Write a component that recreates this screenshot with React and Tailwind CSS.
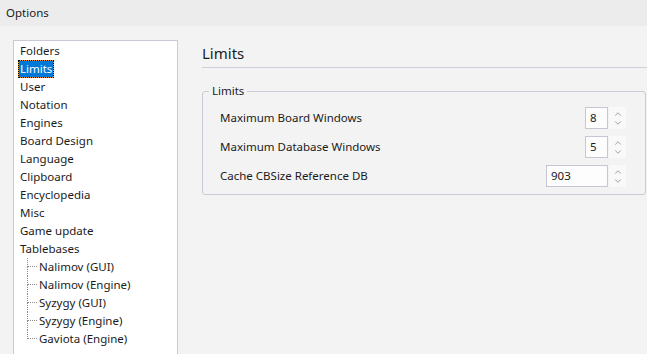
import { ChevronUp, ChevronDown } from 'lucide-react';

const items = [
    'Folders', 'Limits', 'User', 'Notation', 'Engines', 'Board Design', 'Language',
    'Clipboard', 'Encyclopedia', 'Misc', 'Game update', 'Tablebases',
];

const tablebases = [
    'Nalimov (GUI)', 'Nalimov (Engine)', 'Syzygy (GUI)', 'Syzygy (Engine)', 'Gaviota (Engine)',
];

const limits = [
    { label: 'Maximum Board Windows', value: '8', wide: false },
    { label: 'Maximum Database Windows', value: '5', wide: false },
    { label: 'Cache CBSize Reference DB', value: '903', wide: true },
];

function Spin({ value, wide }) {
    return (
        <div className="flex items-stretch gap-px h-[22px]">
            <div className={`${wide ? 'w-[62px]' : 'w-[23px]'} border border-[#c7c7d3] bg-[#fdfdfd] flex items-center pl-[4px]`}>
                {value}
            </div>
            <div className="w-[17px] bg-[#f9f9f9] flex flex-col items-center justify-center text-[#5f5f5f]">
                <ChevronUp size={10} strokeWidth={1.4} className="-mb-[1px]" />
                <ChevronDown size={10} strokeWidth={1.4} />
            </div>
        </div>
    );
}

function Child({ label, last }) {
    return (
        <div className="flex h-[18px] items-center">
            <div className="ml-[9px] w-[10px] h-[18px] flex flex-col">
                <div className="h-[9px] border-l border-b border-dotted border-[#8a8a8a]" />
                <div className={`h-[9px] ${last ? '' : 'border-l border-dotted border-[#8a8a8a]'}`} />
            </div>
            <span className="ml-[2px]">{label}</span>
        </div>
    );
}

export default function App() {
    return (
        <div className="w-[647px] h-[354px] overflow-hidden flex flex-col bg-[#f3f3f3] text-[#1b1b1b] text-[11.5px]"
            style={{ fontFamily: '"Noto Sans", "Open Sans", sans-serif' }}>
            <div className="h-[26px] shrink-0 bg-[#ececec] flex items-center pl-[6px]">Options</div>
            <div className="flex flex-1 pl-[13px] pt-[14px]">
                <div className="w-[165px] h-[340px] shrink-0 border border-[#c9c9d6] bg-white pt-px pl-[4px] leading-[18px]">
                    {items.map((it) => (
                        it === 'Limits' ? (
                            <div key={it} className="h-[18px] flex">
                                <span className="border border-dotted border-black bg-[#f7941d] flex">
                                    <span className="bg-[#0078d7] text-white px-px leading-[16px]">{it}</span>
                                </span>
                            </div>
                        ) : (
                            <div key={it} className="h-[18px] pl-[2px]">{it}</div>
                        )
                    ))}
                    {tablebases.map((t, i) => (
                        <Child key={t} label={t} last={i === tablebases.length - 1} />
                    ))}
                </div>
                <div className="flex-1 pl-[24px] flex flex-col">
                    <div className="h-[26px] flex items-center text-[15px] leading-none">Limits</div>
                    <div className="h-px bg-[#cfcfdb] mt-[1px]" />
                    <fieldset className="mt-[15px] mr-px border border-[#cbcbd7] rounded-[3px] px-0 pb-[7px]">
                        <legend className="ml-[6px] px-[3px] leading-[16px]">Limits</legend>
                        <div className="flex flex-col gap-[7px] pt-[8px] pl-[17px] pr-[19px]">
                            {limits.map((l) => (
                                <div key={l.label} className="flex items-center justify-between">
                                    <span>{l.label}</span>
                                    <Spin value={l.value} wide={l.wide} />
                                </div>
                            ))}
                        </div>
                    </fieldset>
                </div>
            </div>
        </div>
    );
}
